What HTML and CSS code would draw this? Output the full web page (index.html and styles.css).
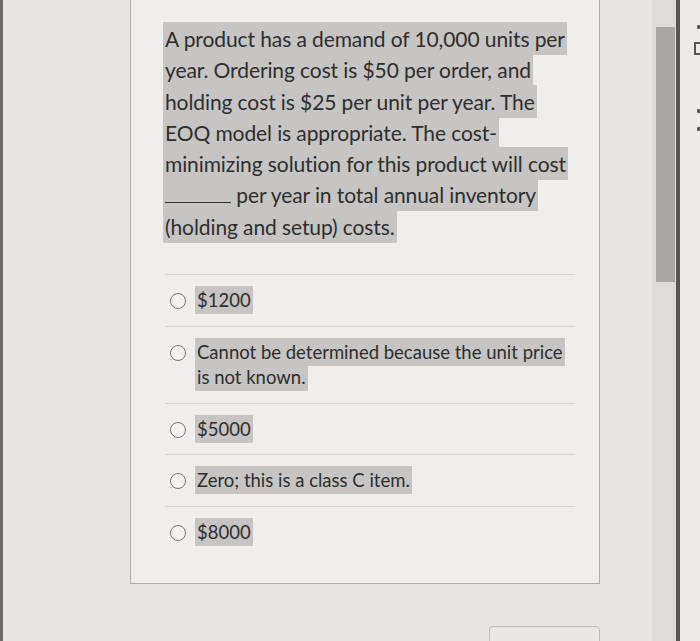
FILE: index.html
```html
<!DOCTYPE html>
<html lang="en">
<head>
<meta charset="utf-8">
<title>Quiz question</title>
<link rel="stylesheet" href="styles.css">
</head>
<body>
<div class="screen">
  <div class="edge"></div>
  <main class="main">
    <section class="card">
      <p class="question"><span class="hl">A product has a demand of 10,000 units per year. Ordering cost is $50 per order, and holding cost is $25 per unit per year. The EOQ model is appropriate. The cost-minimizing solution for this product will cost <span class="blank"></span> per year in total annual inventory (holding and setup) costs.</span></p>
      <ul class="answers">
        <li class="answer"><span class="radio"></span><span class="label"><span class="hl">$1200</span></span></li>
        <li class="answer"><span class="radio"></span><span class="label"><span class="hl">Cannot be determined because the unit price is not known.</span></span></li>
        <li class="answer"><span class="radio"></span><span class="label"><span class="hl">$5000</span></span></li>
        <li class="answer"><span class="radio"></span><span class="label"><span class="hl">Zero; this is a class C item.</span></span></li>
        <li class="answer"><span class="radio"></span><span class="label"><span class="hl">$8000</span></span></li>
      </ul>
    </section>
    <div class="next-btn"></div>
  </main>
  <div class="scrollbar"><div class="thumb"></div></div>
  <div class="divider"></div>
  <aside class="side">
    <span class="dot d1"></span>
    <span class="bracket"></span>
    <span class="dot d2"></span>
    <span class="dot d3"></span>
  </aside>
</div>
</body>
</html>
```

FILE: styles.css
```css
html, body {
  margin: 0;
  padding: 0;
  height: 100%;
  overflow: hidden;
}

body {
  background: #e6e5e3;
  font-family: Lato, "Open Sans", "Liberation Sans", sans-serif;
  color: #2e2e2e;
}

.screen {
  display: flex;
  height: 641px;
  width: 700px;
}

.edge {
  width: 3px;
  background: #6a6a68;
  flex: none;
}

.main {
  width: 649px;
  flex: none;
  display: flex;
  flex-direction: column;
  background: #e7e6e4;
}

.card {
  box-sizing: border-box;
  width: 470px;
  height: 584px;
  margin-left: 127px;
  padding: 23px 22px 0 34px;
  background: #efeeec;
  border: 1px solid #aeadab;
  border-top: none;
  flex: none;
}

.question {
  margin: 0;
  font-size: 21px;
  line-height: 31.3px;
  letter-spacing: -0.1px;
}

.hl {
  background: #c6c5c3;
  padding: 4px 2px;
  -webkit-box-decoration-break: clone;
  box-decoration-break: clone;
}

.question .hl {
  margin-left: -2px;
}

.blank {
  display: inline-block;
  width: 66px;
  height: 1px;
  border-bottom: 1.5px solid #333;
  vertical-align: baseline;
}

.answers {
  list-style: none;
  margin: 32px 0 0;
  padding: 0;
  width: 410px;
}

.answer {
  display: flex;
  align-items: flex-start;
  border-top: 1px solid #d6d5d3;
  padding: 13px 0 12px;
  font-size: 18.5px;
  line-height: 25.5px;
}

.radio {
  flex: none;
  box-sizing: border-box;
  width: 16px;
  height: 16px;
  margin: 5px 11px 0 5px;
  border: 1.5px solid #767674;
  border-radius: 50%;
  background: #f4f3f1;
}

.label {
  flex: 1;
  padding-right: 10px;
}

.answer .hl {
  padding: 3px 2px;
  margin-left: -2px;
}

.next-btn {
  box-sizing: border-box;
  width: 111px;
  height: 30px;
  margin: 42px 0 0 486px;
  border: 1px solid #bdbcba;
  border-radius: 4px;
  background: #e9e8e6;
  flex: none;
}

.scrollbar {
  width: 24px;
  flex: none;
  background: #dddcda;
  padding-top: 27px;
  box-sizing: border-box;
}

.thumb {
  width: 19px;
  margin-left: 4px;
  height: 255px;
  background: #a8a7a5;
}

.divider {
  width: 4px;
  flex: none;
  background: #565654;
}

.side {
  flex: 1;
  background: #ecebe9;
  display: flex;
  flex-direction: column;
  align-items: flex-end;
}

.dot {
  display: block;
  width: 3px;
  height: 4px;
  background: #555;
  border-radius: 1px;
}

.d1 {
  margin-top: 25px;
}

.bracket {
  display: block;
  width: 4px;
  height: 9px;
  margin-top: 13px;
  border: 2px solid #555;
  border-right: none;
}

.d2 {
  margin-top: 54px;
}

.d3 {
  margin-top: 14px;
}
```
